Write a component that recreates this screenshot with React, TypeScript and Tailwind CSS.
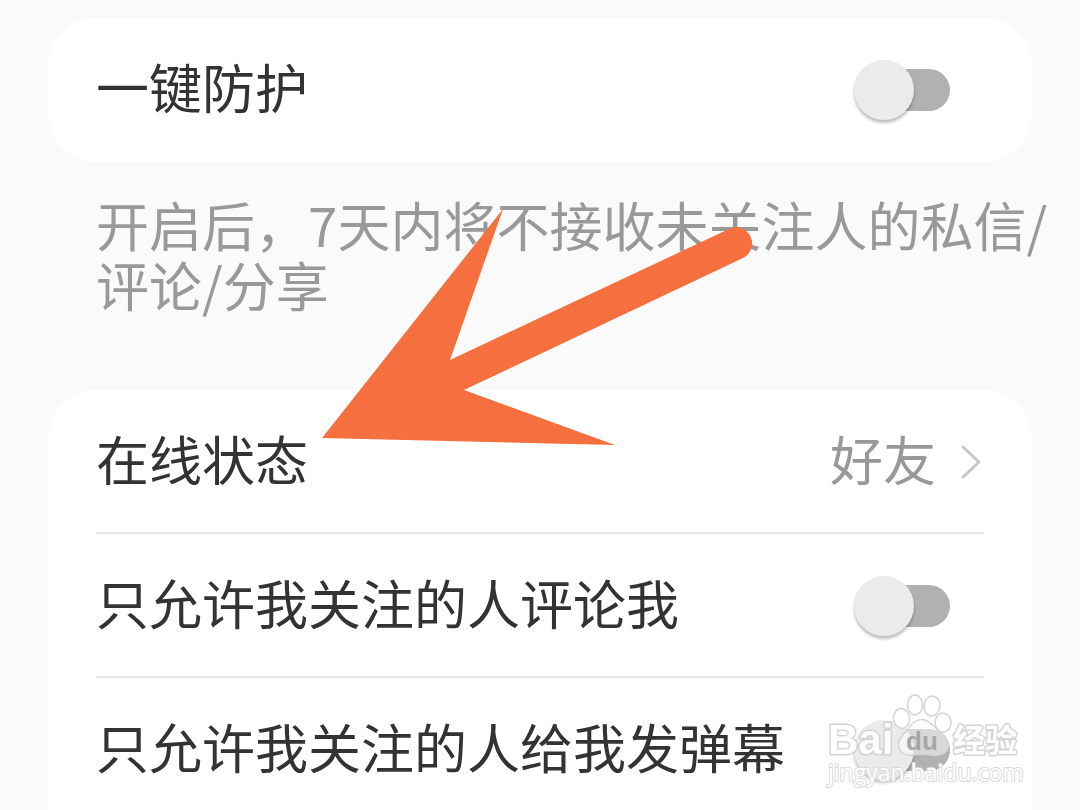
import { useState } from 'react';

interface ToggleRowProps {
    id: string;
    label: string;
    divider?: boolean;
}

const ToggleRow = ({ id, label, divider }: ToggleRowProps) => {
    const [checked, setChecked] = useState(false);

    return (
        <div className={divider ? 'flex h-36 items-center justify-between border-b-2 border-[#e8e8e8] pt-0.5' : 'flex h-36 items-center justify-between'}>
            <label htmlFor={id} className="pb-2">{label}</label>
            <input
                id={id}
                type="checkbox"
                role="switch"
                checked={checked}
                onChange={(e) => setChecked(e.target.checked)}
                className="mr-[34px] flex h-[42px] w-[92px] shrink-0 appearance-none items-center rounded-full bg-[#b1b1b1] before:-ml-1 before:size-[60px] before:shrink-0 before:rounded-full before:bg-[#ebebeb] before:shadow-[0_3px_3px_rgba(0,0,0,0.25)] checked:bg-[#f9b4c8] checked:before:ml-9 checked:before:bg-[#fb7299]"
            />
        </div>
    );
};

const Arrow = () => (
    <svg className="pointer-events-none absolute top-[200px] left-[319px] h-[250px] w-[440px]" viewBox="320 200 440 250" aria-hidden="true">
        <path d="M322 438 L503 209 L450 360 L729 229 A16 16 0 0 1 743 258 L464 390 L615 445 Z" fill="#f66f3f" />
    </svg>
);

const Watermark = () => (
    <svg className="pointer-events-none absolute right-0 bottom-0 h-[120px] w-[260px]" viewBox="820 690 260 120" aria-hidden="true">
        <g fill="#ffffff" fillOpacity="0.65" stroke="#d4d4d4" strokeWidth="1.5">
            <ellipse cx="902.5" cy="718.5" rx="8" ry="10" transform="rotate(-8 902.5 718.5)" />
            <ellipse cx="916" cy="705" rx="7.5" ry="10" />
            <ellipse cx="933" cy="706" rx="8" ry="10" transform="rotate(10 933 706)" />
            <ellipse cx="944" cy="722.5" rx="8" ry="9.5" />
            <path fillOpacity="0.5" d="M923 719.5 C931 719.5 934 727 940 731 C947 736 951 742 949 748 C947 754 940 756 933 755 C926 754 920 754 913 755 C905 756 900 752 899.5 745 C899 738 905 734 909 729 C913 724 916 719.5 923 719.5 Z" />
        </g>
        <g opacity="0.85" fill="#ffffff" stroke="#cecece" strokeWidth="3" strokeLinejoin="round" paintOrder="stroke">
            <text x="829" y="754" className="font-['Liberation_Sans',sans-serif] text-[42px] font-bold">Bai</text>
            <text x="954" y="752" className="font-['Noto_Sans_CJK_SC',sans-serif] text-[32px] font-bold">经验</text>
        </g>
        <text x="829" y="781" fill="#ffffff" stroke="#dadada" strokeWidth="2" strokeLinejoin="round" paintOrder="stroke" className="font-['Open_Sans',sans-serif] text-[23px]">
            jingyan.baidu.com
        </text>
        <text x="907" y="750" fill="#a6a6a6" className="font-['Liberation_Sans',sans-serif] text-[26px] font-bold">du</text>
    </svg>
);

const App = () => {
    return (
        <main className="relative h-screen overflow-hidden border-x border-[#fdfdfd] bg-[#fafafa] pt-[18px] font-['Noto_Sans_CJK_SC',sans-serif] text-[53px] leading-[60px] text-[#333333]">
            <section className="mx-[47px] rounded-[48px] bg-white px-12">
                <ToggleRow id="protect" label="一键防护" />
            </section>
            <p className="pt-8 pr-6 pb-[76px] pl-[95px] text-[#999999]">开启后，7天内将不接收未关注人的私信/评论/分享</p>
            <section className="mx-[47px] rounded-t-[48px] bg-white px-12">
                <div className="flex h-36 items-center justify-between border-b-2 border-[#e8e8e8] pt-0.5">
                    <span className="pb-2">在线状态</span>
                    <button type="button" className="flex items-center gap-6 text-[#999999]">
                        <span className="pb-2">好友</span>
                        <svg className="h-9 w-6" viewBox="0 0 24 36" fill="none" stroke="#c6c6c6" strokeWidth="3" strokeLinecap="round" strokeLinejoin="round" aria-hidden="true">
                            <path d="M3 3 L19 18 L3 33" />
                        </svg>
                    </button>
                </div>
                <ToggleRow id="comment" label="只允许我关注的人评论我" divider />
                <ToggleRow id="danmaku" label="只允许我关注的人给我发弹幕" />
            </section>
            <Arrow />
            <Watermark />
        </main>
    );
};

export default App;
